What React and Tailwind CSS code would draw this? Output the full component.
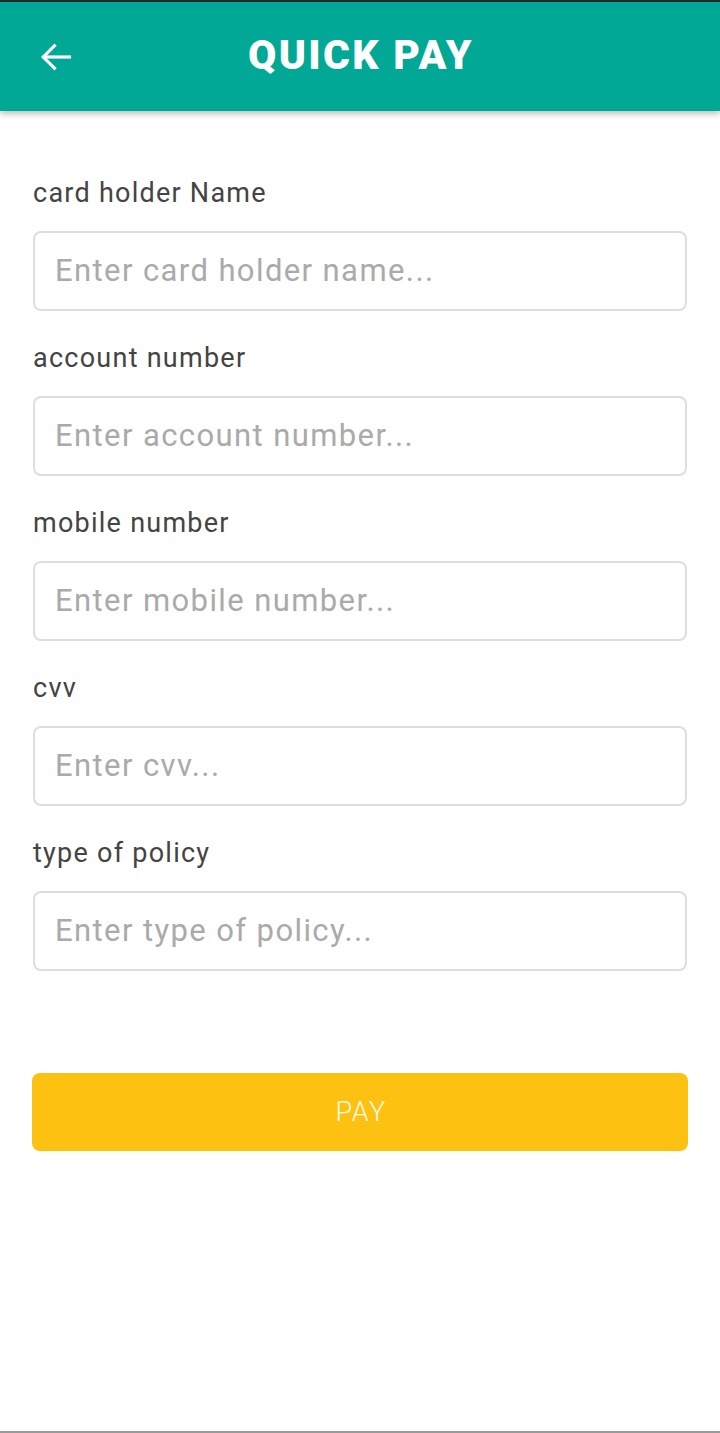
import React from "react";

const fields = [
  ["card holder Name", "Enter card holder name..."],
  ["account number", "Enter account number..."],
  ["mobile number", "Enter mobile number..."],
  ["cvv", "Enter cvv..."],
  ["type of policy", "Enter type of policy..."],
];

export default function App() {
  return (
    <div
      className="w-[720px] h-[1433px] bg-white flex flex-col border-b-2 border-[#9a9a9a]"
      style={{ fontFamily: "Roboto, 'Noto Sans', sans-serif" }}
    >
      <div className="h-[111px] shrink-0 bg-[#00a895] border-t-2 border-[#1d2b29] flex items-center relative shadow-[0_3px_6px_rgba(0,0,0,0.25)] z-10">
        <div className="pl-[38px] pr-[20px] flex items-center">
          <svg width="36" height="36" viewBox="0 0 24 24" fill="none" stroke="white" strokeWidth="2.1" strokeLinecap="square">
            <path d="M21 12H4" />
            <path d="M11 4.5L3.5 12l7.5 7.5" />
          </svg>
        </div>
        <div className="absolute left-0 right-0 top-0 bottom-0 flex items-center justify-center pointer-events-none">
          <span className="text-white text-[41px] font-black tracking-[2.3px] leading-none mt-[-2px] pl-[2px]">QUICK PAY</span>
        </div>
      </div>
      <div className="px-[32px] pt-[64px] flex flex-col">
        {fields.map(([label, ph], i) => (
          <div key={i} className={i === 0 ? "flex flex-col" : "flex flex-col mt-[29px]"}>
            <div className="h-[36px] leading-[36px] pl-[1px] text-[27px] tracking-[1.25px] text-[#444444]">{label}</div>
            <div className="mt-[20px] mx-[1px] h-[80px] border-2 border-[#dedede] rounded-[8px] flex items-center px-[20px]">
              <span className="text-[31px] tracking-[1.4px] text-[#aaaaaa]">{ph}</span>
            </div>
          </div>
        ))}
        <button className="mt-[102px] h-[78px] w-full bg-[#fdc111] rounded-[8px] text-[#fffbe6] text-[27px] font-light tracking-[1.5px] pl-[2px] flex items-center justify-center">
          PAY
        </button>
      </div>
    </div>
  );
}
